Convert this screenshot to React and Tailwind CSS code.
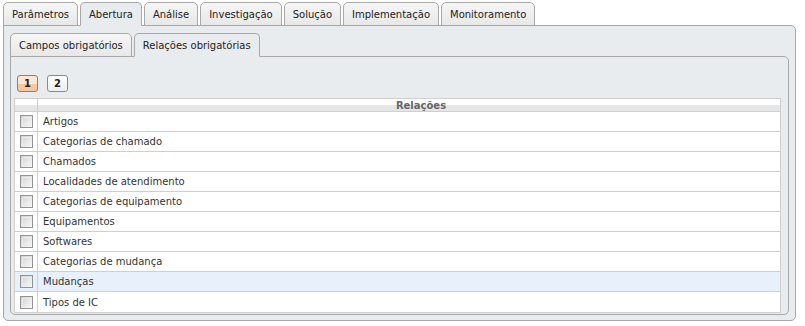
import { useState } from 'react'

const mainTabs = ['Parâmetros', 'Abertura', 'Análise', 'Investigação', 'Solução', 'Implementação', 'Monitoramento']
const subTabs = ['Campos obrigatórios', 'Relações obrigatórias']
const relacoes = [
  'Artigos',
  'Categorias de chamado',
  'Chamados',
  'Localidades de atendimento',
  'Categorias de equipamento',
  'Equipamentos',
  'Softwares',
  'Categorias de mudança',
  'Mudanças',
  'Tipos de IC',
]

function Tab({ label, active }) {
  return (
    <div
      className={
        'h-[24px] px-[8px] pt-px flex items-center rounded-t-[5px] border border-[#a8a8a8] text-[#222] -mb-px ' +
        (active
          ? 'bg-[#e9ecee] border-b-[#e9ecee] relative z-10'
          : 'bg-gradient-to-b from-[#f6f6f6] to-[#e8e8e8]')
      }
    >
      {label}
    </div>
  )
}

function Checkbox() {
  return (
    <div className="w-[13px] h-[13px] border border-[#939393] bg-gradient-to-br from-[#d0d0d0] to-[#fdfdfd] p-px">
      <div className="w-full h-full border border-[#ebebeb]" />
    </div>
  )
}

export default function App() {
  const [selected] = useState('Mudanças')

  return (
    <div className="w-[805px] h-[326px] bg-white pt-[2px] pl-[3px] text-[10px] leading-none" style={{ fontFamily: '"DejaVu Sans", Verdana, sans-serif' }}>
      <div className="flex gap-[2px] relative">
        {mainTabs.map((t) => (
          <Tab key={t} label={t} active={t === 'Abertura'} />
        ))}
      </div>
      <div className="w-[793px] h-[296px] border border-[#a8a8a8] rounded-b-[5px] rounded-tr-[5px] bg-[#e9ecee] pt-[7px] pl-[6px]">
        <div className="flex gap-[2px] relative">
          {subTabs.map((t) => (
            <Tab key={t} label={t} active={t === 'Relações obrigatórias'} />
          ))}
        </div>
        <div className="w-[779px] h-[259px] border border-[#a8a8a8] rounded-b-[5px] rounded-tr-[5px] bg-[#e9ecee] pl-[3px]">
          <div className="flex gap-[9px] pt-[18px] pl-[3px] h-[41px]">
            <div className="w-[21px] h-[17px] rounded-[3px] border border-[#b0745a] bg-gradient-to-b from-[#fde6d6] from-50% to-[#f8c6a3] to-50% flex items-center justify-center font-bold text-[#222]">
              1
            </div>
            <div className="w-[21px] h-[17px] rounded-[3px] border border-[#8a8a8a] bg-gradient-to-b from-white to-[#eeeeee] flex items-center justify-center font-bold text-[#222]">
              2
            </div>
          </div>
          <div className="w-[767px] bg-white border border-[#cfcfcf]">
            <div className="flex h-[13px] border-b border-[#cfcfcf] bg-gradient-to-b from-white from-50% to-[#e6e6e6] to-50%">
              <div className="w-[23px] border-r border-[#cfcfcf]" />
              <div className="flex-1 flex items-center justify-center pl-[24px] pt-[2px] font-bold text-[#666]">Relações</div>
            </div>
            {relacoes.map((r, i) => (
              <div
                key={r}
                className={
                  'flex h-[20px] ' +
                  (i < relacoes.length - 1 ? 'border-b border-[#cfcfcf] ' : '') +
                  (r === selected ? 'bg-[#e8f0fb]' : 'bg-white')
                }
              >
                <div className="w-[23px] border-r border-[#cfcfcf] flex items-center justify-center">
                  <Checkbox />
                </div>
                <div className="flex-1 flex items-center pl-[5px] pt-px text-[#333]">{r}</div>
              </div>
            ))}
          </div>
        </div>
      </div>
    </div>
  )
}
